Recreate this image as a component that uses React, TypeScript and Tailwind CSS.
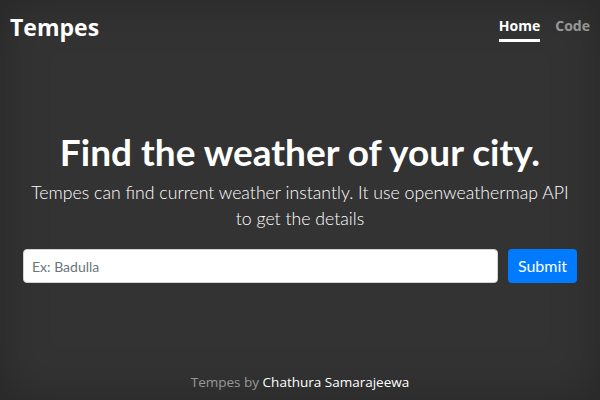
import React from "react";

export default function App() {
  return (
    <div
      className="flex h-[400px] w-[600px] flex-col bg-[#333] text-white shadow-[inset_0_0_3rem_rgba(0,0,0,0.25)]"
      style={{ fontFamily: 'Lato, "Open Sans", sans-serif' }}
    >
      <header
        className="flex items-start justify-between pl-[10px] pr-[10px] pt-[12px]"
        style={{ fontFamily: '"Open Sans", Lato, sans-serif' }}
      >
        <h3 className="text-[23px] font-bold leading-[30px]">Tempes</h3>
        <nav className="flex gap-[15px] pt-[4px]">
          <a className="border-b-[3px] border-white pb-[3px] text-[14px] font-bold leading-[20px] text-white">Home</a>
          <a className="border-b-[3px] border-transparent pb-[3px] text-[14px] font-bold leading-[20px] text-white/50">Code</a>
        </nav>
      </header>
      <main className="flex flex-1 flex-col items-center pt-[86px]">
        <h1 className="text-[37px] font-bold leading-[48px]">Find the weather of your city.</h1>
        <p className="mt-[4px] max-w-[546px] text-center text-[17.7px] font-light leading-[26px]">
          Tempes can find current weather instantly. It use openweathermap API to get the details
        </p>
        <form className="mt-[17px] flex w-full gap-[10px] pl-[23px] pr-[23px]">
          <input
            className="h-[34px] flex-1 rounded-[4px] border border-[#ced4da] bg-white px-[8px] text-[14px] text-[#495057] outline-none placeholder:text-[#6c757d]"
            placeholder="Ex: Badulla"
          />
          <button
            type="button"
            className="h-[34px] w-[69px] rounded-[4px] bg-[#007bff] text-[16px] text-white"
          >
            Submit
          </button>
        </form>
      </main>
      <footer
        className="pb-[8px] text-center text-[13.5px] leading-[20px] text-white/50"
        style={{ fontFamily: '"Open Sans", Lato, sans-serif' }}
      >
        Tempes by <a className="text-white">Chathura Samarajeewa</a>
      </footer>
    </div>
  );
}
